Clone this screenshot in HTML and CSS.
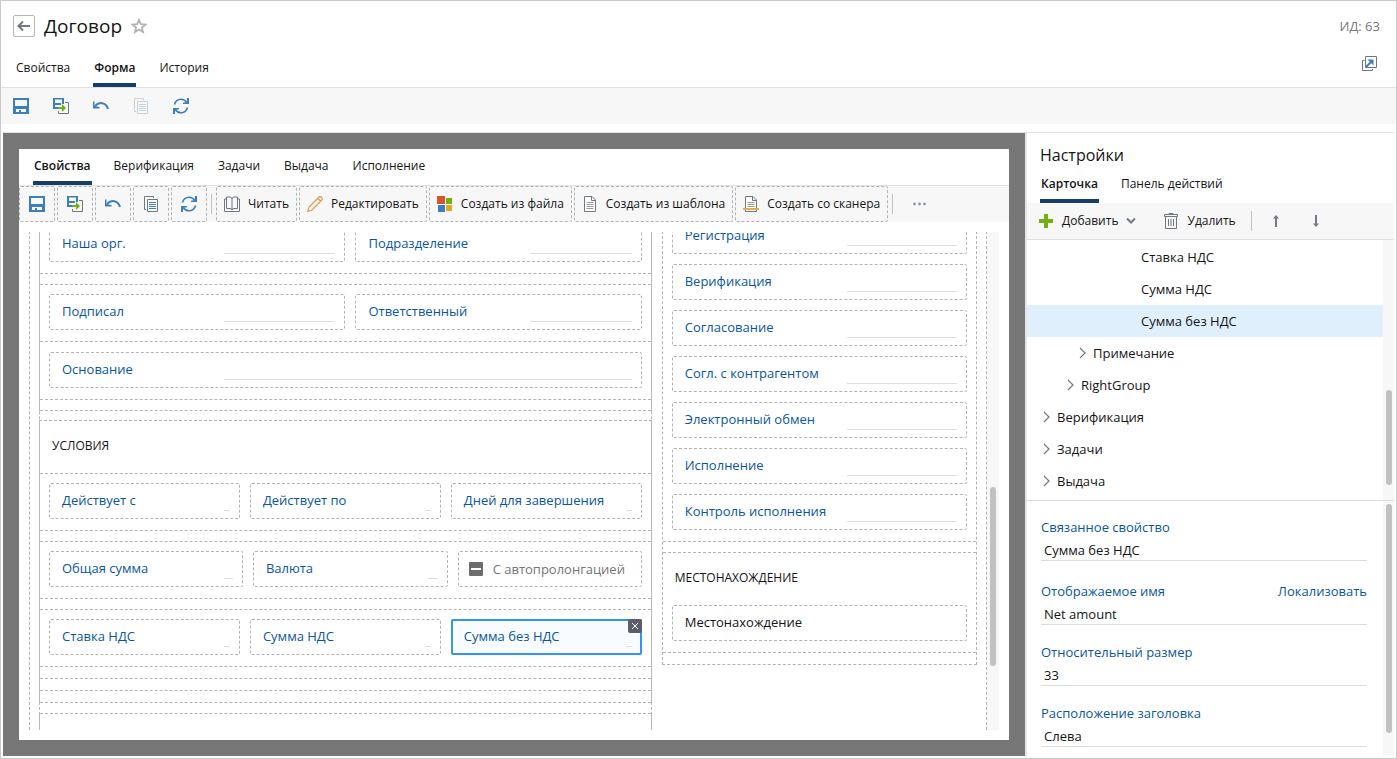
FILE: index.html
```html
<!DOCTYPE html>
<html lang="ru">
<head>
<meta charset="utf-8">
<title>Договор</title>
<link rel="stylesheet" href="styles.css">
</head>
<body>
<svg class="sprite" aria-hidden="true">
  <symbol id="i-back" viewBox="0 0 16 16"><path d="M14 8H3M7 3.500L2.500 8L7 12.500" fill="none" stroke="#717a84" stroke-width="2"/></symbol>
  <symbol id="i-star" viewBox="0 0 16 16"><path d="M8 1.800L9.800 6.100L14.500 6.500L10.900 9.500L12 14L8 11.600L4 14L5.100 9.500L1.500 6.500L6.200 6.100Z" fill="none" stroke="#b3b3b3" stroke-width="1.800"/></symbol>
  <symbol id="i-save" viewBox="0 0 16 16"><path fill="#3d7ebd" fill-rule="evenodd" d="M0 0H16V16H0ZM2 2V8H14V2ZM3 11V14H6V12H8V14H13V11Z"/></symbol>
  <symbol id="i-saveclose" viewBox="0 0 16 16"><path fill="#3d7ebd" fill-rule="evenodd" d="M0 0H11V6H9V1.500H2V5H8V7H2V9H5V11H0Z"/><path d="M12 4.500H15.500V15.500H5.500V13" fill="none" stroke="#6f7780"/><path fill="#72b210" d="M5 9H9V6L13 10L9 14V11H5Z"/></symbol>
  <symbol id="i-undo" viewBox="0 0 16 16"><path d="M2 8C6 3.500 13 4 15 11" fill="none" stroke="#3d7ebd" stroke-width="2"/><path fill="#3d7ebd" d="M0 3.500L1.500 3.500V8L6.500 9V10.500H0Z"/></symbol>
  <symbol id="i-copy" viewBox="0 0 16 16"><path d="M3 13.500H1.500V.500H10.500V2" fill="none" stroke="#6f7780"/><path d="M4.500 3.500H14.500V15.500H4.500Z" fill="#fff" stroke="#6f7780"/><path d="M6 6.500H13M6 8.500H13M6 10.500H13M6 12.500H13" stroke="#3d7ebd"/></symbol>
  <symbol id="i-refresh" viewBox="0 0 16 16"><path d="M1.500 6.500C2 3.500 5 1.200 8 1.200C10.500 1.200 12.500 2.500 14 4.500M14.500 9.500C14 12.500 11 14.800 8 14.800C5.500 14.800 3.500 13.500 2 11.500" fill="none" stroke="#3d7ebd" stroke-width="1.600"/><path fill="#3d7ebd" d="M16 0V6H10V4.800L14 4V0ZM0 16V10H6V11.200L2 12V16Z"/></symbol>
  <symbol id="i-book" viewBox="0 0 16 16"><path d="M2.500 1H6Q8 1.500 8 3Q8 1.500 10 1H13.500V12.500H10Q8 12.500 8 14Q8 12.500 6 12.500H2.500ZM8 3V14M2.500 3H.500V15.500H15.500V3H13.500" fill="none" stroke="#6f7780"/></symbol>
  <symbol id="i-pencil" viewBox="0 0 16 16"><path d="M.700 15.300L2 11L12.500 .700Q15.500 .500 15.300 3.500L5 14ZM11 2.500L13.500 5" fill="none" stroke="#df9a56" stroke-width="1.200"/></symbol>
  <symbol id="i-apps" viewBox="0 0 16 16"><path fill="#d9532c" d="M0 0H8V8H0Z"/><path fill="#6eb110" d="M9 2H15V8H9Z"/><path fill="#3d7ebd" d="M1 9H8V16H1Z"/><path fill="#e2a81f" d="M9 9H15V15H9Z"/></symbol>
  <symbol id="i-doc" viewBox="0 0 16 16"><path d="M2.500 .500H10L13.500 4V15.500H2.500ZM9.500 1V4.500H13" fill="#fff" stroke="#6f7780"/><path d="M4.500 6.500H11.500M4.500 8.500H11.500M4.500 10.500H11.500M4.500 12.500H11.500" stroke="#999"/></symbol>
  <symbol id="i-scan" viewBox="0 0 16 16"><path d="M2.500 .500H10L13.500 4V15.500H2.500ZM9.500 1V4.500H13" fill="#fff" stroke="#6f7780"/><path d="M4.500 6.500H11.500M4.500 8.500H11.500M4.500 10.500H11.500" stroke="#999"/><path d="M0 12H16V14H0Z" fill="#e2ac58"/></symbol>
  <symbol id="i-open" viewBox="0 0 16 16"><path d="M2.500 4.500H.500V14.500H10.500V13" fill="none" stroke="#6f7780"/><path d="M3.500 .500H14.500V11.500H3.500Z" fill="#fff" stroke="#6f7780"/><path d="M4 11L9 6" stroke="#3d7ebd" stroke-width="2"/><path d="M5.500 3.500H11.500V9.500Z" fill="#3d7ebd"/></symbol>
  <symbol id="i-plus" viewBox="0 0 16 16"><path fill="#72b210" d="M6 1H10V6H15V10H10V15H6V10H1V6H6Z"/></symbol>
  <symbol id="i-chevdown" viewBox="0 0 10 10"><path d="M1 2.500L5 6.500L9 2.500" fill="none" stroke="#717a84" stroke-width="2"/></symbol>
  <symbol id="i-chev" viewBox="0 0 10 12"><path d="M3 1L8 6L3 11" fill="none" stroke="#717a84" stroke-width="1.200"/></symbol>
  <symbol id="i-trash" viewBox="0 0 16 16"><path d="M1.500 1.500H14.500V3.500H1.500ZM6 1.500V.500H10V1.500M2.500 3.500V15.500H13.500V3.500M5.500 6V13M8 6V13M10.500 6V13" fill="none" stroke="#6f7780"/></symbol>
  <symbol id="i-up" viewBox="0 0 10 14"><path d="M5 2V13" stroke="#717a84" stroke-width="2"/><path d="M5 1L8 4.500H2Z" fill="#717a84"/></symbol>
  <symbol id="i-down" viewBox="0 0 10 14"><path d="M5 1V12" stroke="#717a84" stroke-width="2"/><path d="M5 13L8 9.500H2Z" fill="#717a84"/></symbol>
  <symbol id="i-close" viewBox="0 0 8 8"><path d="M1 1L7 7M7 1L1 7" stroke="#fff"/></symbol>
  <symbol id="i-dots" viewBox="0 0 16 16"><circle cx="3.500" cy="8" r="1.400" fill="#8a96a8"/><circle cx="8.500" cy="8" r="1.400" fill="#8a96a8"/><circle cx="13.500" cy="8" r="1.400" fill="#8a96a8"/></symbol>
</svg>

<div class="app">
  <header class="header">
    <div class="title-row">
      <button class="back" aria-label="Назад"><svg class="icon"><use href="#i-back"/></svg></button>
      <h1 class="title">Договор</h1>
      <button class="plain" aria-label="В избранное"><svg class="icon"><use href="#i-star"/></svg></button>
      <span class="doc-id">ИД: 63</span>
    </div>
    <div class="tabs-row">
      <nav class="tabs main-tabs">
        <button class="tab">Свойства</button>
        <button class="tab tab-active">Форма</button>
        <button class="tab">История</button>
      </nav>
      <button class="plain open" aria-label="Открыть в новом окне"><svg class="icon"><use href="#i-open"/></svg></button>
    </div>
  </header>

  <div class="main-toolbar">
    <button class="plain" aria-label="Сохранить"><svg class="icon"><use href="#i-save"/></svg></button>
    <button class="plain" aria-label="Сохранить и закрыть"><svg class="icon"><use href="#i-saveclose"/></svg></button>
    <button class="plain" aria-label="Отменить"><svg class="icon"><use href="#i-undo"/></svg></button>
    <button class="plain" aria-label="Копировать" disabled><svg class="icon"><use href="#i-copy"/></svg></button>
    <button class="plain" aria-label="Обновить"><svg class="icon"><use href="#i-refresh"/></svg></button>
  </div>

  <div class="workspace">
    <main class="canvas">
      <div class="card">
        <nav class="tabs card-tabs">
          <button class="tab tab-active">Свойства</button>
          <button class="tab">Верификация</button>
          <button class="tab">Задачи</button>
          <button class="tab">Выдача</button>
          <button class="tab">Исполнение</button>
        </nav>
        <div class="card-toolbar">
          <button class="tool tool-icon" aria-label="Сохранить"><svg class="icon"><use href="#i-save"/></svg></button>
          <button class="tool tool-icon" aria-label="Сохранить и закрыть"><svg class="icon"><use href="#i-saveclose"/></svg></button>
          <button class="tool tool-icon" aria-label="Отменить"><svg class="icon"><use href="#i-undo"/></svg></button>
          <button class="tool tool-icon" aria-label="Копировать"><svg class="icon"><use href="#i-copy"/></svg></button>
          <button class="tool tool-icon" aria-label="Обновить"><svg class="icon"><use href="#i-refresh"/></svg></button>
          <span class="divider"></span>
          <button class="tool"><svg class="icon"><use href="#i-book"/></svg>Читать</button>
          <button class="tool"><svg class="icon"><use href="#i-pencil"/></svg>Редактировать</button>
          <button class="tool"><svg class="icon"><use href="#i-apps"/></svg>Создать из файла</button>
          <button class="tool"><svg class="icon"><use href="#i-doc"/></svg>Создать из шаблона</button>
          <button class="tool"><svg class="icon"><use href="#i-scan"/></svg>Создать со сканера</button>
          <span class="divider"></span>
          <button class="plain more" aria-label="Ещё"><svg class="icon"><use href="#i-dots"/></svg></button>
        </div>

        <div class="viewport">
          <div class="sheet">
            <section class="col col-left">
              <div class="group">
                <div class="row row-top">
                  <div class="field w-297"><span class="label">Наша орг.</span><span class="value"></span></div>
                  <div class="field w-286"><span class="label">Подразделение</span><span class="value"></span></div>
                </div>
                <div class="gap"></div>
                <div class="row row-top">
                  <div class="field w-297"><span class="label">Подписал</span><span class="value"></span></div>
                  <div class="field w-286"><span class="label">Ответственный</span><span class="value"></span></div>
                </div>
                <div class="row row-next">
                  <div class="field"><span class="label">Основание</span><span class="value"></span></div>
                </div>
                <div class="gap"></div>
              </div>
              <div class="group spaced">
                <h2 class="group-title">УСЛОВИЯ</h2>
                <div class="row row-top">
                  <div class="field"><span class="label">Действует с</span><span class="value"></span></div>
                  <div class="field"><span class="label">Действует по</span><span class="value"></span></div>
                  <div class="field"><span class="label">Дней для завершения</span><span class="value"></span></div>
                </div>
                <div class="gap"></div>
                <div class="row row-top">
                  <div class="field w-194"><span class="label">Общая сумма</span><span class="value"></span></div>
                  <div class="field w-195"><span class="label">Валюта</span><span class="value"></span></div>
                  <label class="field w-184 check"><input type="checkbox" class="tri">С автопролонгацией</label>
                </div>
                <div class="gap"></div>
                <div class="row row-top">
                  <div class="field"><span class="label">Ставка НДС</span><span class="value"></span></div>
                  <div class="field"><span class="label">Сумма НДС</span><span class="value"></span></div>
                  <div class="field field-selected"><span class="label">Сумма без НДС</span><span class="value"></span><button class="remove" aria-label="Убрать"><svg class="icon-xs"><use href="#i-close"/></svg></button></div>
                </div>
                <div class="strip"></div>
                <div class="strip"></div>
                <div class="strip"></div>
              </div>
              <div class="gap"></div>
              <div class="group group-last"></div>
            </section>

            <section class="col col-right">
              <div class="stack">
                <div class="field"><span class="label">Регистрация</span><span class="value"></span></div>
                <div class="field"><span class="label">Верификация</span><span class="value"></span></div>
                <div class="field"><span class="label">Согласование</span><span class="value"></span></div>
                <div class="field"><span class="label">Согл. с контрагентом</span><span class="value"></span></div>
                <div class="field"><span class="label">Электронный обмен</span><span class="value"></span></div>
                <div class="field"><span class="label">Исполнение</span><span class="value"></span></div>
                <div class="field"><span class="label">Контроль исполнения</span><span class="value"></span></div>
              </div>
              <div class="gap"></div>
              <h2 class="group-title">МЕСТОНАХОЖДЕНИЕ</h2>
              <div class="row">
                <div class="field"><span class="label label-dark">Местонахождение</span></div>
              </div>
              <div class="strip"></div>
            </section>
          </div>
          <div class="scroll"><div class="thumb thumb-card"></div></div>
        </div>
      </div>
    </main>

    <aside class="side">
      <h2 class="side-title">Настройки</h2>
      <nav class="tabs side-tabs">
        <button class="tab tab-active">Карточка</button>
        <button class="tab">Панель действий</button>
      </nav>
      <div class="side-toolbar">
        <button class="plain"><svg class="icon"><use href="#i-plus"/></svg>Добавить<svg class="icon-sm"><use href="#i-chevdown"/></svg></button>
        <button class="plain delete"><svg class="icon"><use href="#i-trash"/></svg>Удалить</button>
        <span class="divider"></span>
        <button class="plain move" aria-label="Вверх"><svg class="icon-arrow"><use href="#i-up"/></svg></button>
        <button class="plain move" aria-label="Вниз"><svg class="icon-arrow"><use href="#i-down"/></svg></button>
      </div>
      <div class="pane tree-pane">
        <ul class="tree">
          <li class="node leaf">Ставка НДС</li>
          <li class="node leaf">Сумма НДС</li>
          <li class="node leaf node-selected">Сумма без НДС</li>
          <li class="node level-3"><svg class="icon-chev"><use href="#i-chev"/></svg>Примечание</li>
          <li class="node level-2"><svg class="icon-chev"><use href="#i-chev"/></svg>RightGroup</li>
          <li class="node"><svg class="icon-chev"><use href="#i-chev"/></svg>Верификация</li>
          <li class="node"><svg class="icon-chev"><use href="#i-chev"/></svg>Задачи</li>
          <li class="node"><svg class="icon-chev"><use href="#i-chev"/></svg>Выдача</li>
        </ul>
        <div class="scroll"><div class="thumb thumb-tree"></div></div>
      </div>
      <div class="pane props-pane">
        <form class="props">
          <div class="prop"><div class="prop-head"><label for="p1">Связанное свойство</label></div><input id="p1" class="prop-input" value="Сумма без НДС"></div>
          <div class="prop prop-localized"><div class="prop-head"><label for="p2">Отображаемое имя</label><a href="#" class="link">Локализовать</a></div><input id="p2" class="prop-input" value="Net amount"></div>
          <div class="prop"><div class="prop-head"><label for="p3">Относительный размер</label></div><input id="p3" class="prop-input" value="33"></div>
          <div class="prop"><div class="prop-head"><label for="p4">Расположение заголовка</label></div><input id="p4" class="prop-input" value="Слева"></div>
        </form>
        <div class="scroll"><div class="thumb thumb-props"></div></div>
      </div>
    </aside>
  </div>
</div>
</body>
</html>
```
FILE: styles.css
```css
* { box-sizing: border-box; }

body {
  margin: 0;
  font-family: "Open Sans", "Noto Sans", sans-serif;
  font-size: 13px;
  line-height: 20px;
  color: #141414;
}

h1, h2, ul { margin: 0; padding: 0; font-weight: 400; list-style: none; }

button {
  font: inherit;
  color: inherit;
  background: none;
  border: 0;
  padding: 0;
}

.sprite { position: absolute; width: 0; height: 0; }
.icon { display: block; flex: none; width: 16px; height: 16px; }
.icon-sm { display: block; width: 10px; height: 10px; }
.icon-xs { display: block; width: 8px; height: 8px; }
.icon-arrow { display: block; width: 10px; height: 14px; }
.icon-chev { display: block; flex: none; width: 10px; height: 12px; }

.app {
  height: 100vh;
  display: flex;
  flex-direction: column;
  overflow: hidden;
  border: 1px solid #c9c9c9;
  background: #fff;
}

.plain { display: flex; align-items: center; gap: 8px; }
.plain:disabled { opacity: 0.3; }
.divider { flex: none; width: 1px; height: 20px; background: #c3c3c3; }

/* Header */
.header { flex: none; border-bottom: 1px solid #e1e1e1; }
.title-row { display: flex; align-items: center; gap: 9px; height: 50px; padding: 0 16px 0 12px; }
.back {
  display: flex;
  align-items: center;
  justify-content: center;
  width: 22px;
  height: 22px;
  border: 1px solid #b5b5b5;
  border-radius: 2px;
}
.title { font-size: 19px; line-height: 28px; }
.doc-id { margin-left: auto; color: #777; }
.tabs-row { display: flex; align-items: center; justify-content: space-between; height: 36px; padding: 0 18px 0 13px; }
.open { padding-bottom: 10px; }

.tabs { display: flex; gap: 20px; align-self: stretch; font-size: 12px; }
.main-tabs { gap: 21px; }
.tab { padding: 2px 2px 0; border-bottom: 4px solid transparent; white-space: nowrap; }
.tab-active { padding: 2px 1px 0; font-weight: 600; border-color: #143f6b; }

.main-toolbar {
  flex: none;
  display: flex;
  align-items: center;
  gap: 24px;
  height: 36px;
  padding: 0 12px;
  background: #f7f7f7;
}

/* Workspace */
.workspace {
  flex: 1;
  min-height: 0;
  display: flex;
  margin: 8px 2px 2px;
  border-top: 1px solid #e1e1e1;
}
.canvas { flex: 1; min-width: 0; padding: 16px; background: #777; }
.card { height: 100%; display: flex; flex-direction: column; background: #fff; }
.card-tabs { flex: none; align-self: auto; height: 37px; padding: 0 14px; border-bottom: 1px solid #e1e1e1; }
.card-toolbar {
  flex: none;
  display: flex;
  align-items: center;
  gap: 2px;
  height: 36px;
  background: #f7f7f7;
  font-size: 12px;
}
.tool {
  display: flex;
  align-items: center;
  gap: 8px;
  height: 36px;
  padding: 0 7px;
  border: 1px dashed #b3b3b3;
  border-radius: 2px;
  white-space: nowrap;
}
.tool, .side-toolbar .plain { line-height: 22px; }
.tool-icon { width: 36px; padding: 0 9px; }
.card-toolbar .divider { margin: 0 2px; }
.more { margin-left: 14px; }

.viewport { flex: 1; min-height: 0; display: flex; margin: 10px; overflow: hidden; }
.sheet {
  flex: 1;
  display: flex;
  align-items: flex-start;
  gap: 10px;
  margin-top: -16px;
  padding: 0 9px;
  border: 1px dashed #b3b3b3;
  border-width: 0 1px;
}
.col { border: 1px dashed #b3b3b3; }
.col-left { flex: 614; min-width: 0; }
.col-right { flex: 315; min-width: 0; border-top: 0; }
.group { margin: 0 -1px; border: 1px solid #b8b8b8; border-width: 0 1px; }
.group-last { height: 40px; }
.spaced { margin-top: 9px; border-top: 1px dashed #b3b3b3; }
.row {
  display: flex;
  gap: 10px;
  padding: 0 9px 11px;
  border-bottom: 1px dashed #b3b3b3;
}
.row-top { padding-top: 9px; }
.row-next { padding-top: 10px; }
.gap { height: 11px; border-bottom: 1px dashed #b3b3b3; }
.strip { height: 12px; border-bottom: 1px dashed #b3b3b3; }
.group-title { height: 52px; padding: 15px 12px 0; font-size: 12px; }
.group > .group-title { height: 53px; border-bottom: 1px dashed #b3b3b3; }
.col-right .strip:last-child { height: 11px; border-bottom: 0; }

.field {
  position: relative;
  flex: 1 1 0;
  min-width: 0;
  display: flex;
  height: 36px;
  padding: 6px 9px 7px 12px;
  border: 1px dashed #b3b3b3;
  border-radius: 2px;
}
.w-297 { flex-grow: 297; }
.w-286 { flex-grow: 286; }
.w-194 { flex-grow: 194; }
.w-195 { flex-grow: 195; }
.w-184 { flex-grow: 184; }
.label { flex: 0 0 162px; color: #0b569a; white-space: nowrap; }
.label-dark { color: #141414; }
.value { flex: 1; border-bottom: 1px solid #ddd; }
.field-selected { padding: 5px 8px 6px 11px; border: 2px solid #3296f0; background: #f8fbff; }
.remove {
  position: absolute;
  top: -2px;
  right: -2px;
  display: flex;
  align-items: center;
  justify-content: center;
  width: 14px;
  height: 14px;
  border-radius: 2px;
  background: #5c5f6b;
}
.check { align-items: center; gap: 10px; padding: 0 10px; color: #757575; white-space: nowrap; }
.tri {
  appearance: none;
  flex: none;
  width: 14px;
  height: 14px;
  margin: 0;
  border-radius: 1px;
  background: linear-gradient(#fff, #fff) center / 10px 2px no-repeat #6d6d6d;
}
.stack { display: flex; flex-direction: column; gap: 10px; padding: 2px 9px 11px; border-bottom: 1px dashed #b3b3b3; }
.stack .field { flex: none; }

.scroll { flex: none; width: 12px; background: #f7f7f7; }
.thumb { width: 6px; margin: 0 auto; border-radius: 3px; background: #c1c1c1; }
.thumb-card { height: 36%; margin-top: 255px; }
.thumb-tree { height: 95px; margin-top: 150px; }
.thumb-props { height: 229px; margin-top: 3px; }

/* Settings panel */
.side { flex: none; width: 369px; display: flex; flex-direction: column; border-left: 2px solid #e6e6e6; }
.side .scroll { width: 11px; }
.side-title { padding: 10px 13px 0; font-size: 16px; line-height: 24px; }
.side-tabs { flex: none; align-self: auto; height: 36px; padding: 0 13px; }
.side-toolbar {
  flex: none;
  display: flex;
  align-items: center;
  height: 37px;
  padding: 0 11px;
  border-bottom: 1px solid #e1e1e1;
  background: #f7f7f7;
  font-size: 12px;
}
.delete { margin: 0 15px 0 27px; }
.move { justify-content: center; width: 40px; padding-left: 8px; }
.pane { display: flex; overflow: hidden; }
.tree-pane { flex: none; height: 261px; border-bottom: 1px solid #dcdce0; }
.tree { flex: 1; padding-top: 1px; }
.node { display: flex; align-items: center; gap: 6px; height: 32px; padding-left: 14px; }
.level-2 { padding-left: 38px; }
.level-3 { padding-left: 50px; }
.leaf { padding-left: 114px; }
.node-selected { background: #e0effc; }
.props-pane { flex: 1; min-height: 0; }
.props { flex: 1; display: flex; flex-direction: column; gap: 17px; padding: 16px 16px 0 14px; }
.prop-localized { margin-top: 3px; }
.prop-head { display: flex; justify-content: space-between; color: #0b569a; }
.link { color: #0b569a; text-decoration: none; }
.prop-input {
  display: block;
  width: 100%;
  height: 24px;
  padding: 3px 3px 0;
  border: 0;
  border-bottom: 1px solid #ddd;
  outline: 0;
  background: none;
  font: inherit;
  color: inherit;
}
```
